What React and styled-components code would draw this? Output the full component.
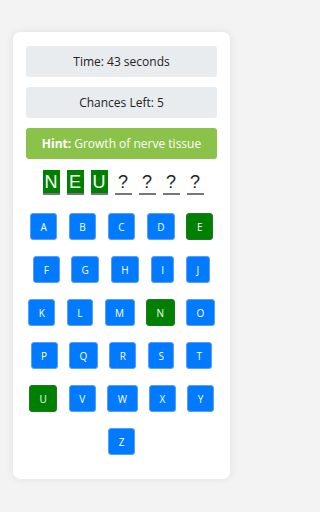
import React from 'react';
import styled, { createGlobalStyle } from 'styled-components';

const GlobalStyle = createGlobalStyle`
  html, body {
    margin: 0;
    padding: 0;
    background: #f3f3f3;
    font-family: 'Open Sans', 'Noto Sans', sans-serif;
  }
`;

const Page = styled.div`
  width: 243px;
  box-sizing: border-box;
  padding: 32px 13px 33px;
`;

const Card = styled.div`
  background: #fff;
  border-radius: 7px;
  box-shadow: 0 0 8px rgba(0, 0, 0, 0.08);
  padding: 14px 13px 24px;
  display: flex;
  flex-direction: column;
`;

const InfoBox = styled.div`
  height: 31px;
  border-radius: 3px;
  background: ${(p) => (p.$hint ? '#8bc34a' : '#e9ecef')};
  color: ${(p) => (p.$hint ? '#fff' : '#222')};
  display: flex;
  align-items: center;
  justify-content: center;
  font-size: 12px;
  font-weight: 500;
  margin-bottom: 10px;
  white-space: nowrap;

  b {
    font-weight: 700;
    margin-right: 3px;
  }
`;

const Word = styled.div`
  display: flex;
  justify-content: center;
  gap: 7px;
  margin-top: 1px;
  margin-bottom: 18px;
  padding-left: 3px;
`;

const Slot = styled.span`
  width: 17px;
  height: 23px;
  border-bottom: 2px solid #777;
  background: ${(p) => (p.$found ? '#008000' : 'transparent')};
  color: ${(p) => (p.$found ? '#fff' : '#222')};
  font-family: 'Liberation Sans', Arial, sans-serif;
  font-size: 18px;
  line-height: 24px;
  text-align: center;
`;

const Keys = styled.div`
  display: flex;
  flex-wrap: wrap;
  justify-content: center;
  column-gap: 11.5px;
  row-gap: 16px;
`;

const Key = styled.button`
  height: 27px;
  padding: 0 9.5px;
  min-width: 23px;
  border: 1px solid ${(p) => (p.$used ? '#1d7a1d' : '#5a9cff')};
  border-radius: 3px;
  background: ${(p) => (p.$used ? '#008000' : '#007bff')};
  color: #fff;
  font-family: 'Open Sans', 'Noto Sans', sans-serif;
  font-size: 10px;
  font-weight: 500;
  cursor: pointer;
`;

const word = 'NEU????'.split('');
const used = ['E', 'N', 'U'];
const letters = 'ABCDEFGHIJKLMNOPQRSTUVWXYZ'.split('');

export default function App() {
  return (
    <>
      <GlobalStyle />
      <Page>
        <Card>
          <InfoBox>Time: 43 seconds</InfoBox>
          <InfoBox>Chances Left: 5</InfoBox>
          <InfoBox $hint>
            <b>Hint:</b> Growth of nerve tissue
          </InfoBox>
          <Word>
            {word.map((c, i) => (
              <Slot key={i} $found={c !== '?'}>
                {c}
              </Slot>
            ))}
          </Word>
          <Keys>
            {letters.map((l) => (
              <Key key={l} $used={used.includes(l)}>
                {l}
              </Key>
            ))}
          </Keys>
        </Card>
      </Page>
    </>
  );
}
